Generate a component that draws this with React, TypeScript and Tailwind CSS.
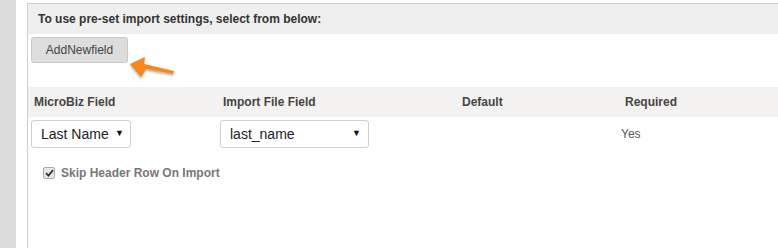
import React from "react";

export default function App() {
  return (
    <div className="flex h-[248px] w-[778px] overflow-hidden bg-white" style={{ fontFamily: '"Liberation Sans", Arial, sans-serif' }}>
      <div className="w-[16px] shrink-0 bg-[#dcdcdc]" />
      <div className="w-[11px] shrink-0 bg-white" />
      <div className="relative mt-[3px] w-[780px] shrink-0 border-l border-t border-[#cfcfcf]">
        <div className="flex h-[30px] items-center bg-[#efefef] pl-[10px] text-[12px] font-bold text-[#333]">
          To use pre-set import settings, select from below:
        </div>
        <div className="pl-[3px] pt-[3px]">
          <button className="flex h-[26px] w-[97px] items-center justify-center rounded-[3px] border border-[#c8c8c8] bg-[#dddddd] text-[12px] text-[#444]">
            AddNewfield
          </button>
        </div>
        <svg className="absolute left-[98px] top-[47px]" width="56" height="34" viewBox="0 0 56 34">
          <defs>
            <filter id="sh" x="-20%" y="-20%" width="140%" height="160%">
              <feDropShadow dx="0" dy="1.5" stdDeviation="1" floodColor="#000" floodOpacity="0.35" />
            </filter>
          </defs>
          <polygon
            points="4,13 19,6 18,13 48,20 47,23 20,18 15,26"
            fill="#f7861c"
            filter="url(#sh)"
          />
        </svg>
        <div className="mt-[24px] flex h-[30px] items-center bg-[#f3f2f1] text-[12px] font-bold text-[#444]">
          <div className="w-[189px] pl-[6px]">MicroBiz Field</div>
          <div className="w-[239px] pl-[6px]">Import File Field</div>
          <div className="w-[163px] pl-[6px]">Default</div>
          <div className="pl-[6px]">Required</div>
        </div>
        <div className="mt-[3px] flex h-[28px] items-center">
          <div className="w-[189px] pl-[3px]">
            <div className="flex h-[28px] w-[100px] items-center justify-between rounded-[3px] border border-[#cfcfcf] bg-white pl-[9px] pr-[6px] text-[14px] text-[#222]">
              <span>Last Name</span>
              <span className="text-[9px] text-[#111]">▼</span>
            </div>
          </div>
          <div className="w-[402px] pl-[3px]">
            <div className="flex h-[28px] w-[149px] items-center justify-between rounded-[3px] border border-[#cfcfcf] bg-white pl-[9px] pr-[7px] text-[14px] text-[#222]">
              <span>last_name</span>
              <span className="text-[9px] text-[#111]">▼</span>
            </div>
          </div>
          <div className="pl-[2px] text-[12px] text-[#555]">Yes</div>
        </div>
        <div className="ml-[15px] mt-[16px] flex items-center gap-[6px]">
          <div className="flex h-[12px] w-[12px] items-center justify-center rounded-[2px] border border-[#aaa] bg-[#e8e8e8]">
            <svg width="9" height="8" viewBox="0 0 9 8">
              <path d="M1 4.2 L3.4 6.6 L8 1.2" stroke="#333" strokeWidth="1.8" fill="none" />
            </svg>
          </div>
          <span className="text-[12px] font-bold text-[#777]">Skip Header Row On Import</span>
        </div>
      </div>
    </div>
  );
}
